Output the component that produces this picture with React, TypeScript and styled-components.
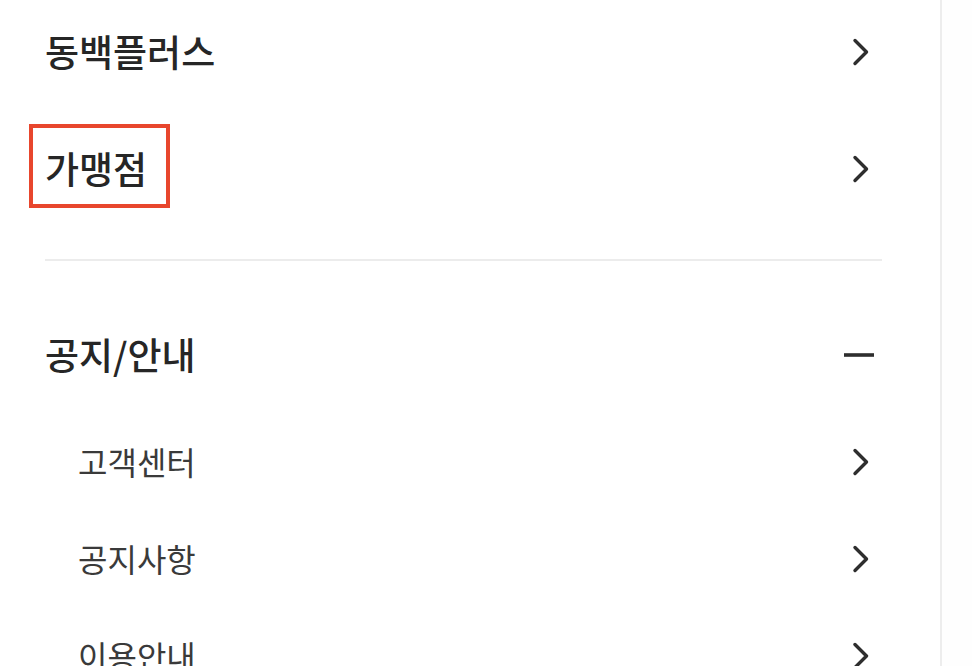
import React from "react";
import styled, { createGlobalStyle } from "styled-components";

const GlobalStyle = createGlobalStyle`
  html, body {
    margin: 0;
    padding: 0;
    background: #ffffff;
    overflow: hidden;
  }
  body {
    font-family: "Noto Sans CJK KR", "Noto Sans", sans-serif;
    color: #2b2b2b;
  }
`;

const Page = styled.div`
  width: 972px;
  height: 666px;
  display: flex;
  overflow: hidden;
  background: #ffffff;
`;

const Menu = styled.div`
  width: 942px;
  flex-shrink: 0;
  border-right: 2px solid #ededed;
  padding: 0 58px 0 45px;
  box-sizing: border-box;
  display: flex;
  flex-direction: column;
`;

const Side = styled.div`
  flex: 1;
  background: #fefefe;
`;

const Section = styled.div<{ $offset?: number }>`
  display: flex;
  flex-direction: column;
  margin-top: ${(p) => p.$offset ?? 0}px;
`;

const Row = styled.div<{ $sub?: boolean }>`
  height: ${(p) => (p.$sub ? 97 : 117)}px;
  flex-shrink: 0;
  display: flex;
  align-items: center;
  justify-content: space-between;
  padding-left: ${(p) => (p.$sub ? 33 : 0)}px;
  padding-right: 6px;
`;

const Label = styled.span<{ $sub?: boolean; $marked?: boolean }>`
  position: relative;
  font-size: ${(p) => (p.$sub ? 32 : 37)}px;
  font-weight: ${(p) => (p.$sub ? 400 : 500)};
  color: ${(p) => (p.$sub ? "#3a3a3a" : "#262626")};
  line-height: 1.1;

  &::after {
    content: "";
    display: ${(p) => (p.$marked ? "block" : "none")};
    position: absolute;
    left: -16px;
    right: -23px;
    top: -24px;
    bottom: -19px;
    border: 4px solid #e8462d;
  }
`;

const Divider = styled.hr`
  width: 100%;
  height: 2px;
  margin: 32px 0 35px;
  border: none;
  background: #ececec;
  flex-shrink: 0;
`;

const IconBox = styled.span`
  display: flex;
  align-items: center;
  justify-content: center;
  width: 34px;
  height: 28px;
  color: #2e2e2e;
`;

const Chevron = () => (
  <IconBox>
    <svg width="34" height="28" viewBox="0 0 34 28" fill="none">
      <path
        d="M13 2.5 L24.5 14 L13 25.5"
        stroke="currentColor"
        strokeWidth="3.4"
        strokeLinecap="round"
        strokeLinejoin="round"
      />
    </svg>
  </IconBox>
);

const Minus = () => (
  <IconBox>
    <svg width="34" height="28" viewBox="0 0 34 28" fill="none">
      <path d="M2 14 H32" stroke="currentColor" strokeWidth="3.6" />
    </svg>
  </IconBox>
);

const topItems = ["동백플러스", "가맹점"];
const subItems = ["고객센터", "공지사항", "이용안내"];

export default function App() {
  return (
    <>
      <GlobalStyle />
      <Page>
        <Menu>
          <Section $offset={-7}>
            {topItems.map((item) => (
              <Row key={item}>
                <Label $marked={item === "가맹점"}>{item}</Label>
                <Chevron />
              </Row>
            ))}
          </Section>
          <Divider />
          <Section>
            <Row>
              <Label>공지/안내</Label>
              <Minus />
            </Row>
            {subItems.map((item) => (
              <Row key={item} $sub>
                <Label $sub>{item}</Label>
                <Chevron />
              </Row>
            ))}
          </Section>
        </Menu>
        <Side />
      </Page>
    </>
  );
}
